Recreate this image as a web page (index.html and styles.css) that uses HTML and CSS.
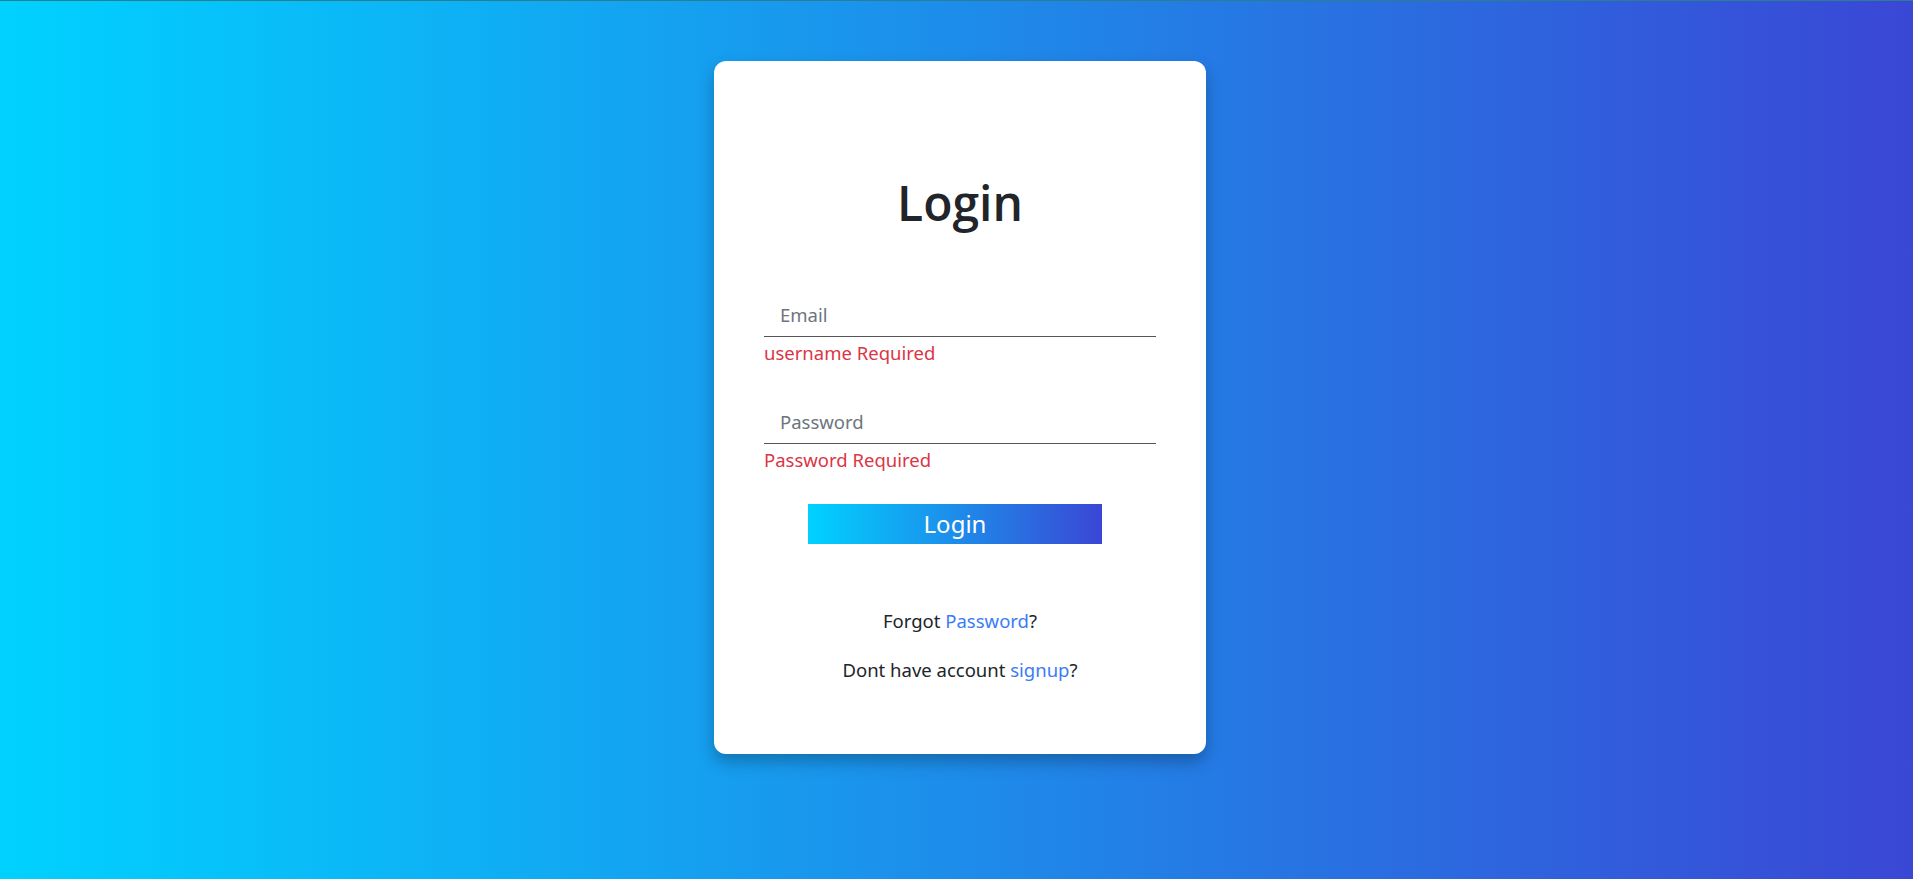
FILE: index.html
```html
<!DOCTYPE html>
<html lang="en">

<head>
    <meta charset="UTF-8">
    <meta name="viewport" content="width=device-width, initial-scale=1.0">
    <title>Login</title>
    <link rel="stylesheet" href="styles.css">
</head>

<body>
    <div class="page">
        <div class="login-card">
            <h1>Login</h1>
            <form class="login-form" onsubmit="return false">
                <div class="input-group">
                    <input type="text" placeholder="Email">
                    <div class="error-text">username Required</div>
                </div>
                <div class="input-group">
                    <input type="password" placeholder="Password">
                    <div class="error-text">Password Required</div>
                </div>
                <button class="login-btn" type="submit">Login</button>
            </form>
            <p class="card-link first">Forgot <a href="#">Password</a>?</p>
            <p class="card-link">Dont have account <a href="#">signup</a>?</p>
        </div>
    </div>
</body>

</html>
```

FILE: styles.css
```css
body {
    font-family: "Noto Sans", "Open Sans", sans-serif;
    margin: 0;
    padding: 0;
    min-height: 100vh;
    border-top: 1px solid #2a7f8c;
    box-sizing: border-box;
    background: linear-gradient(90deg, #00d2ff 0%, #3a47d5 100%);
    color: #212529;
}

.page {
    padding: 60px 0 0 7px;
}

.login-card {
    background: white;
    width: 492px;
    margin: 0 auto;
    padding: 0 50px 72px;
    box-sizing: border-box;
    border-radius: 12px;
    box-shadow: 0 8px 16px rgba(0, 0, 0, 0.25);
}

.login-card h1 {
    margin: 0;
    padding-top: 112px;
    font-family: "Open Sans", "Noto Sans", sans-serif;
    font-size: 48px;
    line-height: 60px;
    font-weight: 600;
    text-align: center;
}

.login-form {
    margin-top: 61px;
}

.input-group {
    margin-bottom: 36px;
}

.input-group input {
    display: block;
    width: 100%;
    height: 43px;
    padding: 0 16px 2px;
    font-family: inherit;
    font-size: 18.5px;
    border: none;
    border-bottom: 1px solid #555;
    box-sizing: border-box;
    outline: none;
}

.input-group input::placeholder {
    color: #6c757d;
}

.error-text {
    margin-top: 4px;
    font-size: 18.5px;
    line-height: 24px;
    color: #dc3545;
}

.login-btn {
    display: block;
    width: 294px;
    height: 40px;
    margin: -4px 0 0 44px;
    padding: 0;
    border: none;
    background: linear-gradient(90deg, #00d2ff 0%, #3a47d5 100%);
    color: white;
    font-family: inherit;
    font-size: 24px;
    line-height: 40px;
    cursor: pointer;
}

.card-link {
    margin: 25px 0 0;
    font-size: 18.5px;
    line-height: 24px;
    text-align: center;
}

.card-link.first {
    margin-top: 65px;
}

.card-link a {
    color: #3a7cf6;
    text-decoration: none;
}
```
